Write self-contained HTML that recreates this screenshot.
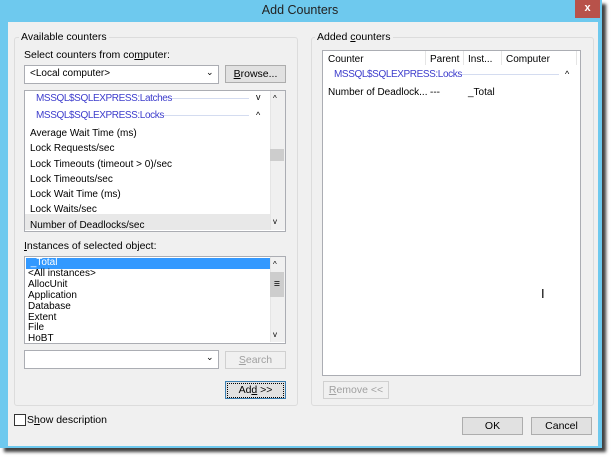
<!DOCTYPE html>
<html><head><style>
body{margin:0;width:615px;height:459px;background:#fff;position:relative;overflow:hidden;font-family:"Liberation Sans",sans-serif;font-size:10.5px;color:#000}
.a{position:absolute}
.frame{left:0;top:0;width:602px;height:448px;background:#6ec9ee;box-shadow:4px 4px 3px rgba(0,0,0,.75)}
.client{left:8px;top:22px;width:590px;height:424px;background:#f0f0f0}
.gb{border:1px solid #dcdcdc;border-radius:3px}
.lbl{background:#f0f0f0;padding:0 2px}
.box{background:#fff;border:1px solid #abadb3}
.btn{background:#e1e1e1;border:1px solid #adadad;text-align:center;line-height:16px;box-sizing:border-box}
.dis{color:#a0a0a0;background:#f0f0f0;border-color:#d0d0d0}
.blue{color:#3c3ccc;letter-spacing:-0.4px}
.sb{background:#f0f0f0;border-left:1px solid #e5e5e5}
.line{height:1px;background:#d4dcf0}
.t{font-size:10px}
</style></head><body>
<div class="a frame"></div>
<div class="a" style="left:0;top:3px;width:600px;text-align:center;font-size:12.5px;color:#222">Add Counters</div>
<div class="a" style="left:575px;top:0;width:25px;height:18px;background:#b8524a;color:#fff;text-align:center;font-weight:bold;font-size:11px;line-height:17px">x</div>
<div class="a client"></div>

<div class="a gb" style="left:14px;top:37px;width:282px;height:367px"></div>
<div class="a lbl" style="left:19px;top:31px">Available counters</div>
<div class="a" style="left:24px;top:49px">Select counters from co<u>m</u>puter:</div>
<div class="a box" style="left:24px;top:65px;width:193px;height:17px"><span class="a t" style="left:5px;top:2px">&lt;Local computer&gt;</span><span class="a" style="left:181px;top:1px;font-size:9px">&#8964;</span></div>
<div class="a btn" style="left:225px;top:65px;width:61px;height:18px"><u>B</u>rowse...</div>

<div class="a box" style="left:24px;top:90px;width:260px;height:140px"></div>
<div class="a" style="left:25px;top:214px;width:245px;height:16px;background:#e8e8e8"></div>
<div class="a sb" style="left:270px;top:91px;width:14px;height:139px"></div>
<div class="a" style="left:270px;top:149px;width:14px;height:12px;background:#cdcdcd"></div>
<div class="a" style="left:273px;top:94px;font-size:8px">^</div>
<div class="a" style="left:273px;top:217px;font-size:8px">v</div>
<div class="a blue t" style="left:36px;top:93px">MSSQL$SQLEXPRESS:Latches</div>
<div class="a line" style="left:172px;top:98px;width:77px"></div>
<div class="a" style="left:256px;top:92px;font-size:9px">v</div>
<div class="a blue t" style="left:36px;top:110px">MSSQL$SQLEXPRESS:Locks</div>
<div class="a line" style="left:164px;top:115px;width:85px"></div>
<div class="a" style="left:256px;top:110px;font-size:9px">^</div>
<div class="a t" style="left:30px;top:126px;line-height:15.3px">Average Wait Time (ms)<br>Lock Requests/sec<br>Lock Timeouts (timeout &gt; 0)/sec<br>Lock Timeouts/sec<br>Lock Wait Time (ms)<br>Lock Waits/sec<br>Number of Deadlocks/sec</div>

<div class="a" style="left:24px;top:240px"><u>I</u>nstances of selected object:</div>
<div class="a box" style="left:24px;top:256px;width:260px;height:86px;overflow:hidden">
<div class="a" style="left:1px;top:1px;width:244px;height:11px;background:#3399ff"></div>
<div class="a t" style="left:3px;top:1px;line-height:10.9px">&nbsp;<span style="color:#fff">_Total</span><br>&lt;All instances&gt;<br>AllocUnit<br>Application<br>Database<br>Extent<br>File<br>HoBT</div>
</div>
<div class="a sb" style="left:270px;top:257px;width:14px;height:85px"></div>
<div class="a" style="left:270px;top:272px;width:14px;height:25px;background:#cdcdcd;text-align:center;line-height:24px">≡</div>
<div class="a" style="left:273px;top:260px;font-size:8px">^</div>
<div class="a" style="left:273px;top:330px;font-size:8px">v</div>
<div class="a box" style="left:24px;top:350px;width:193px;height:17px"><span class="a" style="left:181px;top:1px;font-size:9px">&#8964;</span></div>
<div class="a btn dis" style="left:225px;top:351px;width:61px;height:18px"><u>S</u>earch</div>
<div class="a btn" style="left:225px;top:381px;width:61px;height:18px;border-color:#3c7fb1"><div style="margin:1px;border:1px dotted #000;line-height:13px">Ad<u>d</u> &gt;&gt;</div></div>

<div class="a" style="left:14px;top:414px;width:10px;height:10px;border:1px solid #333;background:#fff"></div>
<div class="a" style="left:27px;top:414px">S<u>h</u>ow description</div>

<div class="a gb" style="left:311px;top:37px;width:281px;height:367px"></div>
<div class="a lbl" style="left:315px;top:31px">Added <u>c</u>ounters</div>
<div class="a box" style="left:322px;top:50px;width:257px;height:324px"></div>
<div class="a" style="left:425px;top:51px;width:1px;height:14px;background:#e5e5e5"></div>
<div class="a" style="left:463px;top:51px;width:1px;height:14px;background:#e5e5e5"></div>
<div class="a" style="left:501px;top:51px;width:1px;height:14px;background:#e5e5e5"></div>
<div class="a" style="left:576px;top:51px;width:1px;height:14px;background:#e5e5e5"></div>
<div class="a t" style="left:328px;top:54px">Counter</div>
<div class="a t" style="left:430px;top:54px">Parent</div>
<div class="a t" style="left:468px;top:54px">Inst...</div>
<div class="a t" style="left:506px;top:54px">Computer</div>
<div class="a blue t" style="left:334px;top:69px">MSSQL$SQLEXPRESS:Locks</div>
<div class="a line" style="left:462px;top:74px;width:97px"></div>
<div class="a" style="left:565px;top:69px;font-size:9px">^</div>
<div class="a t" style="left:328px;top:87px">Number of Deadlock...</div>
<div class="a t" style="left:430px;top:87px">---</div>
<div class="a t" style="left:468px;top:87px">_Total</div>
<div class="a" style="left:541px;top:286px;font-size:13px">I</div>
<div class="a btn dis" style="left:323px;top:381px;width:66px;height:18px"><u>R</u>emove &lt;&lt;</div>

<div class="a btn" style="left:462px;top:417px;width:61px;height:18px">OK</div>
<div class="a btn" style="left:531px;top:417px;width:61px;height:18px">Cancel</div>
</body></html>
